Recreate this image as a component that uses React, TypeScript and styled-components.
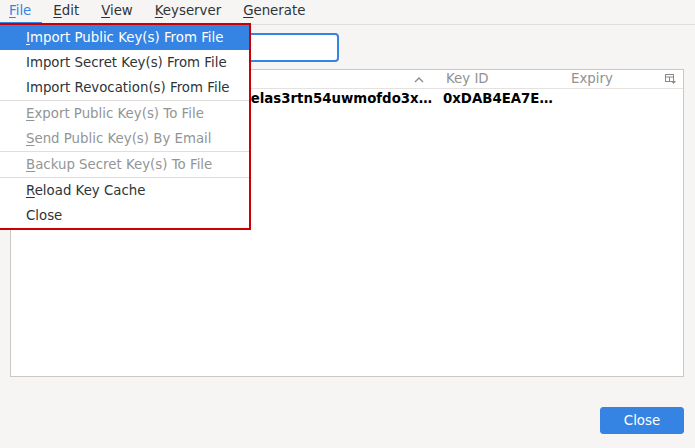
import React from "react";
import styled, { createGlobalStyle } from "styled-components";

const Global = createGlobalStyle`
  html, body { margin: 0; padding: 0; }
  body {
    background: #f6f5f4;
    font-family: "DejaVu Sans", "Noto Sans", sans-serif;
    font-size: 13.33px;
    color: #2e3436;
  }
`;

const Window = styled.div`
  position: relative;
  width: 695px;
  height: 448px;
  background: #f6f5f4;
  overflow: hidden;
  display: flex;
  flex-direction: column;
`;

const MenuBar = styled.div`
  display: flex;
  height: 25px;
  border-bottom: 1px solid #e0ddda;
  box-sizing: border-box;
`;

const MenuTitle = styled.div<{ $open?: boolean }>`
  padding: 0 11px 0 9px;
  margin-right: 2px;
  height: 24px;
  line-height: 22px;
  box-sizing: border-box;
  font-size: 13.33px;
  color: ${(p) => (p.$open ? "#3584e4" : "#2e3436")};
  border-bottom: 2px solid ${(p) => (p.$open ? "#3584e4" : "transparent")};
  u { text-decoration: underline; text-underline-offset: 2px; }
`;

const Body = styled.div`
  flex: 1;
  display: flex;
  flex-direction: column;
  padding: 8px 11px 14px 10px;
`;

const SearchEntry = styled.div`
  width: 329px;
  height: 29px;
  box-sizing: border-box;
  border: 2px solid #3584e4;
  border-radius: 4px;
  background: #ffffff;
`;

const Table = styled.div`
  margin-top: 7px;
  height: 308px;
  box-sizing: border-box;
  border: 1px solid #cdc7c2;
  background: #ffffff;
  display: flex;
  flex-direction: column;
`;

const HeaderRow = styled.div`
  display: grid;
  grid-template-columns: 432px 128px 1fr 18px;
  height: 18px;
  border-bottom: 1px solid #e4e1de;
  color: #919191;
  font-size: 13.33px;
  line-height: 16px;
`;

const HeaderCell = styled.div<{ $align?: string; $padRight?: number; $padLeft?: number }>`
  display: flex;
  align-items: center;
  justify-content: ${(p) => p.$align || "flex-start"};
  padding-right: ${(p) => p.$padRight ?? 0}px;
  padding-left: ${(p) => p.$padLeft ?? 0}px;
  white-space: nowrap;
`;

const DataRow = styled.div`
  display: grid;
  grid-template-columns: 432px 128px 1fr;
  height: 19px;
  line-height: 19px;
  font-weight: bold;
  color: #000000;
  font-size: 13.33px;
`;

const DataCell = styled.div<{ $align?: string; $padRight?: number }>`
  white-space: nowrap;
  overflow: hidden;
  text-align: ${(p) => p.$align || "left"};
  padding-right: ${(p) => p.$padRight ?? 0}px;
`;

const Footer = styled.div`
  display: flex;
  justify-content: flex-end;
  margin-top: 30px;
`;

const Button = styled.button`
  width: 84px;
  height: 27px;
  border: 1px solid #3584e4;
  border-radius: 3px;
  background: #3584e4;
  color: #ffffff;
  font-family: "DejaVu Sans", sans-serif;
  font-size: 13.33px;
  padding: 0;
`;

const Dropdown = styled.div`
  position: absolute;
  left: -2px;
  top: 23px;
  width: 253px;
  box-sizing: border-box;
  border: 2px solid #cc0000;
  background: #ffffff;
`;

const Item = styled.div<{ $active?: boolean; $disabled?: boolean }>`
  height: 25px;
  box-sizing: border-box;
  padding: 1px 0 0 26px;
  line-height: 24px;
  font-size: 13.33px;
  white-space: nowrap;
  background: ${(p) => (p.$active ? "#3584e4" : "transparent")};
  color: ${(p) => (p.$active ? "#ffffff" : p.$disabled ? "#929595" : "#2e3436")};
  u { text-decoration: underline; text-underline-offset: 2px; }
`;

const Separator = styled.div`
  height: 1px;
  background: #e0ddda;
`;

const SortArrow = () => (
  <svg width="10" height="7" viewBox="0 0 10 7">
    <path d="M1 6 L5 2 L9 6" fill="none" stroke="#8a8a8a" strokeWidth="1.3" />
  </svg>
);

const ColumnsIcon = () => (
  <svg width="11" height="10" viewBox="0 0 11 10">
    <rect x="0.5" y="0.5" width="8" height="7" fill="none" stroke="#8a8a8a" />
    <line x1="0.5" y1="3" x2="8.5" y2="3" stroke="#8a8a8a" />
    <line x1="4.5" y1="3" x2="4.5" y2="7.5" stroke="#8a8a8a" />
    <path d="M6 7 L11 7 L8.5 10 Z" fill="#8a8a8a" />
  </svg>
);

export default function App() {
  return (
    <Window>
      <Global />
      <MenuBar>
        <MenuTitle $open><u>F</u>ile</MenuTitle>
        <MenuTitle><u>E</u>dit</MenuTitle>
        <MenuTitle><u>V</u>iew</MenuTitle>
        <MenuTitle><u>K</u>eyserver</MenuTitle>
        <MenuTitle><u>G</u>enerate</MenuTitle>
      </MenuBar>
      <Body>
        <SearchEntry />
        <Table>
          <HeaderRow>
            <HeaderCell $align="flex-end" $padRight={19}>
              <SortArrow />
            </HeaderCell>
            <HeaderCell $padLeft={3}>Key ID</HeaderCell>
            <HeaderCell>Expiry</HeaderCell>
            <HeaderCell>
              <ColumnsIcon />
            </HeaderCell>
          </HeaderRow>
          <DataRow>
            <DataCell $align="right" $padRight={11}>elas3rtn54uwmofdo3x…</DataCell>
            <DataCell>0xDAB4EA7E…</DataCell>
            <DataCell />
          </DataRow>
        </Table>
        <Footer>
          <Button>Close</Button>
        </Footer>
      </Body>
      <Dropdown>
        <Item $active><u>I</u>mport Public Key(s) From File</Item>
        <Item>Import Secret Key(s) From File</Item>
        <Item>Import Revocation(s) From File</Item>
        <Separator />
        <Item $disabled><u>E</u>xport Public Key(s) To File</Item>
        <Item $disabled><u>S</u>end Public Key(s) By Email</Item>
        <Separator />
        <Item $disabled><u>B</u>ackup Secret Key(s) To File</Item>
        <Separator />
        <Item><u>R</u>eload Key Cache</Item>
        <Item>Close</Item>
      </Dropdown>
    </Window>
  );
}
